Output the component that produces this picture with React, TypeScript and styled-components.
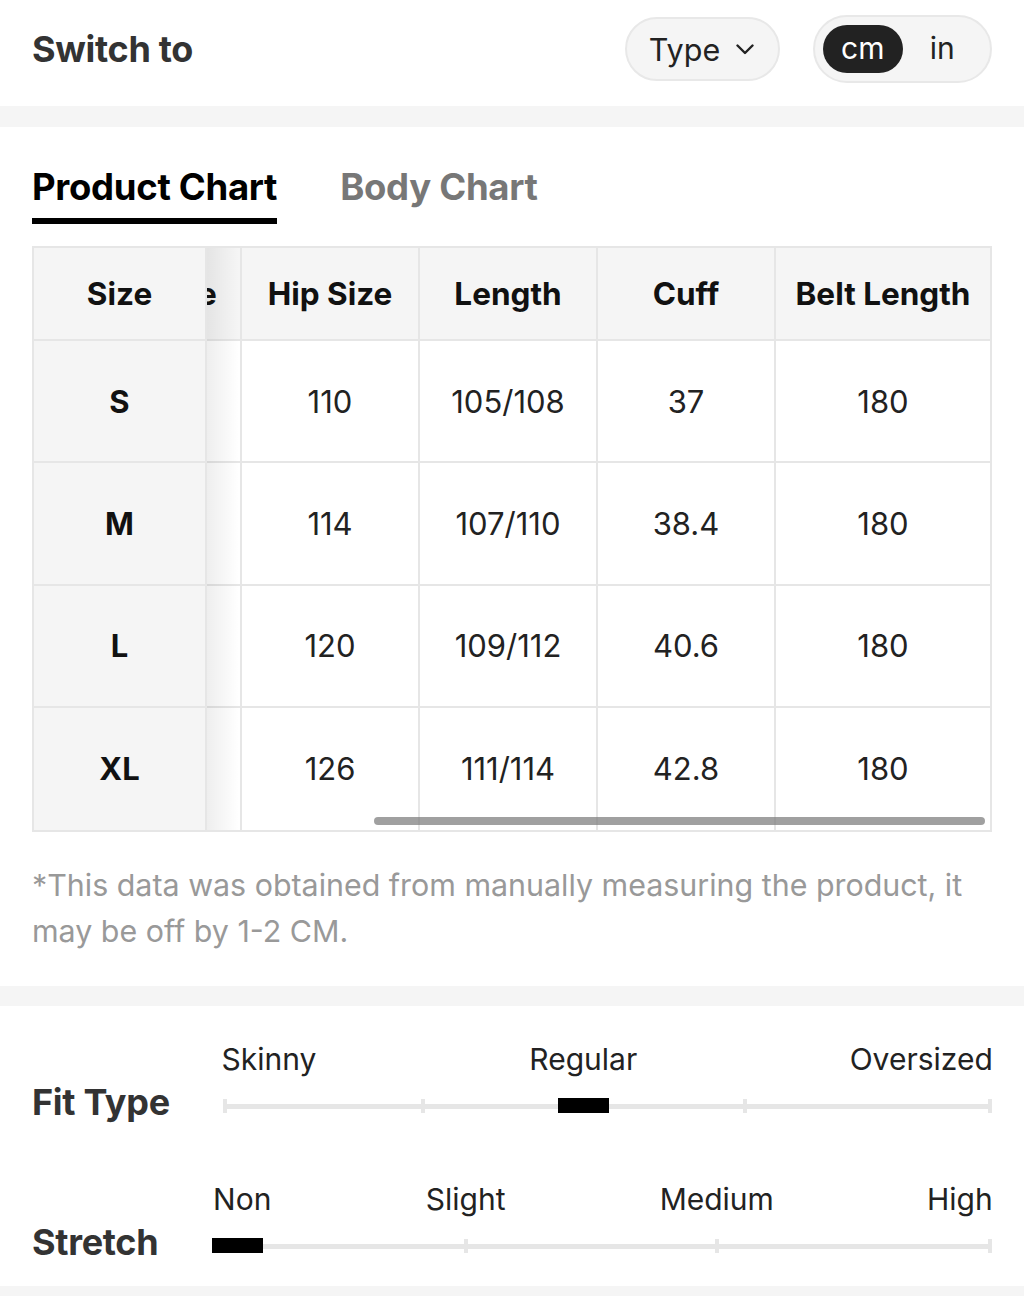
import React, { useLayoutEffect, useRef } from "react";
import styled, { createGlobalStyle } from "styled-components";

const Global = createGlobalStyle`
  html, body { margin: 0; padding: 0; background: #fff; }
  body { font-family: Inter, "Noto Sans", "Liberation Sans", sans-serif; color: #222; -webkit-font-smoothing: antialiased; }
  * { box-sizing: border-box; }
`;

const Page = styled.div`
  width: 1024px;
  background: #fff;
`;

const TopBar = styled.div`
  height: 106px;
  padding: 0 32px 8px;
  display: flex;
  align-items: center;
  justify-content: space-between;
`;

const Title = styled.div`
  font-size: 36px;
  font-weight: 700;
  color: #333;
  letter-spacing: -0.3px;
`;

const Controls = styled.div`
  display: flex;
  align-items: center;
  gap: 33px;
`;

const TypePill = styled.div`
  height: 64px;
  width: 155px;
  border-radius: 32px;
  background: #f5f5f5;
  border: 2px solid #e8e8e8;
  display: flex;
  align-items: center;
  justify-content: center;
  gap: 16px;
  font-size: 30.5px;
  color: #222;
  padding-right: 2px;
`;

const UnitToggle = styled.div`
  height: 68px;
  width: 179px;
  border-radius: 34px;
  background: #f5f5f5;
  border: 2px solid #e8e8e8;
  display: flex;
  align-items: center;
  padding: 0 8px;
`;

const UnitOption = styled.div<{ $active?: boolean }>`
  height: 48px;
  width: 83px;
  border-radius: 24px;
  display: flex;
  align-items: center;
  justify-content: center;
  font-size: 30px;
  color: ${(p) => (p.$active ? "#fff" : "#222")};
  background: ${(p) => (p.$active ? "#222" : "transparent")};
  padding-bottom: 2px;
`;

const Band = styled.div<{ $h: number }>`
  height: ${(p) => p.$h}px;
  background: #f5f5f5;
`;

const ChartSection = styled.section`
  padding: 40px 32px 32px;
`;

const Tabs = styled.div`
  display: flex;
  gap: 63px;
  margin-bottom: 22px;
`;

const Tab = styled.div<{ $active?: boolean }>`
  font-size: 36.5px;
  font-weight: 700;
  line-height: 40px;
  color: ${(p) => (p.$active ? "#000" : "#777")};
  padding-bottom: 11px;
  border-bottom: 6px solid ${(p) => (p.$active ? "#000" : "transparent")};
  letter-spacing: -0.3px;
`;

const TableFrame = styled.div`
  position: relative;
  display: flex;
  border: 2px solid #e6e6e6;
`;

const StickyTable = styled.table`
  border-collapse: separate;
  border-spacing: 0;
  table-layout: fixed;
  width: 173px;
  flex: none;
`;

const ScrollBox = styled.div`
  position: relative;
  flex: 1;
  min-width: 0;
  overflow-x: auto;
  scrollbar-width: none;
  &::-webkit-scrollbar { display: none; }
`;

const ScrollTable = styled.table<{ $w: number }>`
  border-collapse: separate;
  border-spacing: 0;
  table-layout: fixed;
  width: ${(p) => p.$w}px;
`;

const EdgeShadow = styled.div`
  position: absolute;
  top: 0;
  bottom: 0;
  left: 173px;
  width: 32px;
  background: linear-gradient(to right, rgba(0, 0, 0, 0.065), rgba(0, 0, 0, 0));
  pointer-events: none;
  z-index: 2;
`;

const Cell = styled.td<{ $head?: boolean; $key?: boolean; $last?: boolean; $bottom?: boolean }>`
  height: ${(p) => (p.$head ? "93px" : "122.25px")};
  text-align: center;
  vertical-align: middle;
  padding: 0;
  font-size: ${(p) => (p.$head ? "31.5px" : "31px")};
  font-weight: ${(p) => (p.$head || p.$key ? 700 : 400)};
  color: ${(p) => (p.$head || p.$key ? "#111" : "#222")};
  background: ${(p) => (p.$head || p.$key ? "#f5f5f5" : "#fff")};
  border-right: ${(p) => (p.$last ? "none" : "2px solid #e6e6e6")};
  border-bottom: ${(p) => (p.$bottom ? "none" : "2px solid #e6e6e6")};
  white-space: nowrap;
  overflow: hidden;
`;

const ScrollThumb = styled.div`
  position: absolute;
  right: 5px;
  bottom: 5px;
  width: 611px;
  height: 8px;
  border-radius: 4px;
  background: rgba(120, 120, 120, 0.7);
  z-index: 3;
`;

const Note = styled.p`
  margin: 30px 0 0;
  font-size: 30.4px;
  line-height: 46px;
  color: #999;
`;

const FitSection = styled.section`
  padding: 36px 32px 10px;
  display: flex;
  flex-direction: column;
  gap: 46px;
`;

const SliderRow = styled.div`
  display: flex;
  align-items: flex-end;
  gap: 54px;
`;

const RowTitle = styled.div`
  height: 60px;
  line-height: 52px;
  font-size: 36px;
  font-weight: 700;
  color: #333;
  white-space: nowrap;
  letter-spacing: -0.3px;
`;

const SliderArea = styled.div`
  flex: 1;
  display: flex;
  flex-direction: column;
`;

const ScaleLabels = styled.div`
  position: relative;
  height: 34px;
`;

const ScaleLabel = styled.span<{ $align: "start" | "center" | "end" }>`
  position: absolute;
  top: 0;
  font-size: 30px;
  line-height: 34px;
  color: #222;
  white-space: nowrap;
  transform: ${(p) => (p.$align === "start" ? "none" : p.$align === "center" ? "translateX(-50%)" : "translateX(-100%)")};
`;

const TrackBox = styled.div`
  position: relative;
  height: 60px;
  display: flex;
  align-items: center;
`;

const Track = styled.div`
  width: 100%;
  height: 5px;
  background: #e6e6e6;
`;

const Tick = styled.span`
  position: absolute;
  top: 23px;
  width: 4px;
  height: 14px;
  margin-left: -2px;
  background: #e6e6e6;
`;

const Thumb = styled.span`
  position: absolute;
  top: 22px;
  width: 51px;
  height: 15px;
  background: #000;
`;

type Label = { text: string; at: number; align: "start" | "center" | "end" };

function Slider({ title, labels, ticks, thumb }: { title: string; labels: Label[]; ticks: number[]; thumb: number }) {
  return (
    <SliderRow>
      <RowTitle>{title}</RowTitle>
      <SliderArea>
        <ScaleLabels>
          {labels.map((l) => (
            <ScaleLabel key={l.text} $align={l.align} style={{ left: `${l.at * 100}%` }}>
              {l.text}
            </ScaleLabel>
          ))}
        </ScaleLabels>
        <TrackBox>
          <Track />
          {ticks.map((t) => (
            <Tick key={t} style={{ left: `${t * 100}%` }} />
          ))}
          <Thumb style={{ left: `${thumb}px` }} />
        </TrackBox>
      </SliderArea>
    </SliderRow>
  );
}

const Chevron = () => (
  <svg width="18" height="11" viewBox="0 0 18 11" fill="none">
    <path d="M1.5 1.5 L9 9 L16.5 1.5" stroke="#222" strokeWidth="2.4" strokeLinecap="round" strokeLinejoin="round" />
  </svg>
);

const headers = ["Waist Size", "Hip Size", "Length", "Cuff", "Belt Length"];
const sizes = ["S", "M", "L", "XL"];
const rows = [
  ["76", "110", "105/108", "37", "180"],
  ["80", "114", "107/110", "38.4", "180"],
  ["86", "120", "109/112", "40.6", "180"],
  ["92", "126", "111/114", "42.8", "180"],
];
const widths = [208, 178, 178, 178, 214];
const tableWidth = widths.reduce((a, b) => a + b, 0);

export default function App() {
  const scrollRef = useRef<HTMLDivElement>(null);
  useLayoutEffect(() => {
    const el = scrollRef.current;
    if (el) el.scrollLeft = el.scrollWidth;
  }, []);

  return (
    <Page>
      <Global />
      <TopBar>
        <Title>Switch to</Title>
        <Controls>
          <TypePill>
            <span>Type</span>
            <Chevron />
          </TypePill>
          <UnitToggle>
            <UnitOption $active>cm</UnitOption>
            <UnitOption>in</UnitOption>
          </UnitToggle>
        </Controls>
      </TopBar>
      <Band $h={21} />
      <ChartSection>
        <Tabs>
          <Tab $active>Product Chart</Tab>
          <Tab>Body Chart</Tab>
        </Tabs>
        <TableFrame>
          <StickyTable>
            <thead>
              <tr>
                <Cell as="th" $head>Size</Cell>
              </tr>
            </thead>
            <tbody>
              {sizes.map((s, i) => (
                <tr key={s}>
                  <Cell $key $bottom={i === sizes.length - 1}>{s}</Cell>
                </tr>
              ))}
            </tbody>
          </StickyTable>
          <ScrollBox ref={scrollRef}>
            <ScrollTable $w={tableWidth}>
              <colgroup>
                {widths.map((w, i) => (
                  <col key={i} style={{ width: `${w}px` }} />
                ))}
              </colgroup>
              <thead>
                <tr>
                  {headers.map((h, i) => (
                    <Cell as="th" key={h} $head $last={i === headers.length - 1}>
                      {h}
                    </Cell>
                  ))}
                </tr>
              </thead>
              <tbody>
                {rows.map((r, ri) => (
                  <tr key={ri}>
                    {r.map((v, i) => (
                      <Cell key={i} $last={i === r.length - 1} $bottom={ri === rows.length - 1}>
                        {v}
                      </Cell>
                    ))}
                  </tr>
                ))}
              </tbody>
            </ScrollTable>
          </ScrollBox>
          <EdgeShadow />
          <ScrollThumb />
        </TableFrame>
        <Note>*This data was obtained from manually measuring the product, it may be off by 1-2 CM.</Note>
      </ChartSection>
      <Band $h={20} />
      <FitSection>
        <Slider
          title="Fit Type"
          labels={[
            { text: "Skinny", at: -0.003, align: "start" },
            { text: "Regular", at: 0.468, align: "center" },
            { text: "Oversized", at: 1.001, align: "end" },
          ]}
          ticks={[0.002, 0.259, 0.678, 0.997]}
          thumb={334}
        />
        <Slider
          title="Stretch"
          labels={[
            { text: "Non", at: 0.001, align: "start" },
            { text: "Slight", at: 0.325, align: "center" },
            { text: "Medium", at: 0.647, align: "center" },
            { text: "High", at: 1.001, align: "end" },
          ]}
          ticks={[0.002, 0.325, 0.647, 0.997]}
          thumb={0}
        />
      </FitSection>
      <Band $h={11} />
    </Page>
  );
}
